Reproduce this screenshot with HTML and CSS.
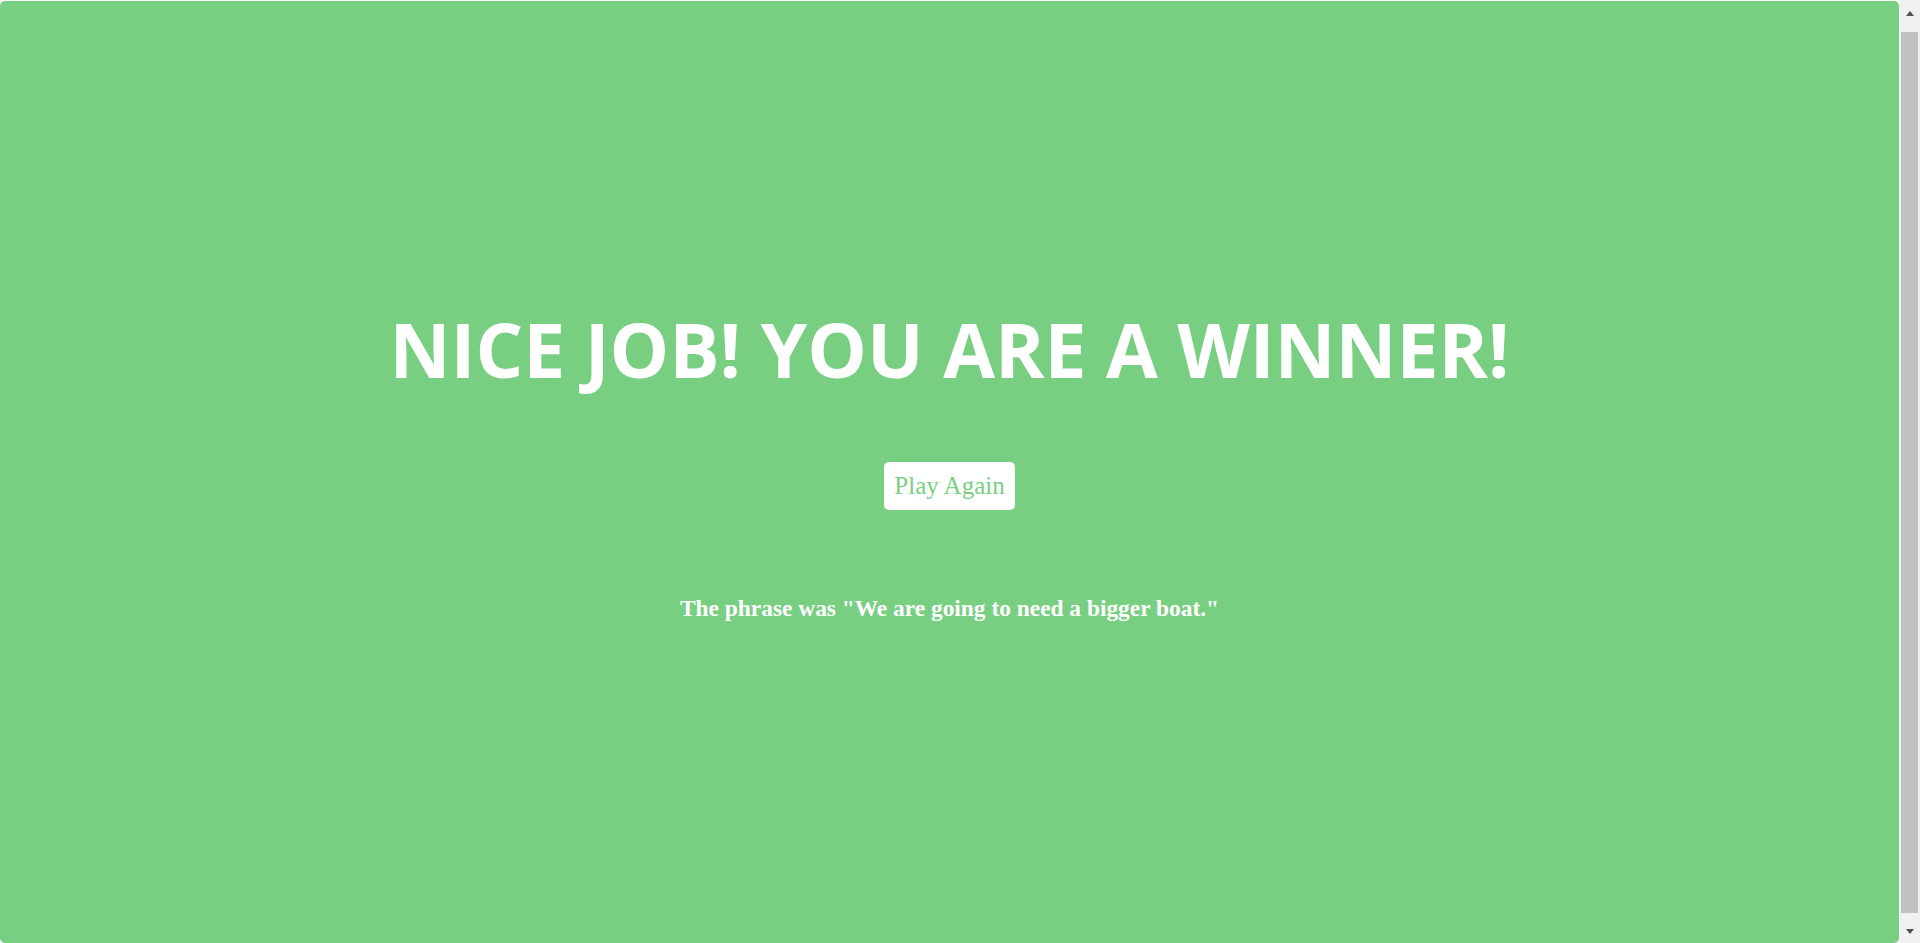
FILE: index.html
```html
<!DOCTYPE html>
<html lang="en">
<head>
<meta charset="utf-8">
<title>Wheel of Success</title>
<link rel="stylesheet" href="styles.css">
</head>
<body>
<div class="main-container"></div>
<div class="overlay win">
  <h2 class="title">NICE JOB! YOU ARE A WINNER!</h2>
  <button class="btn-reset">Play Again</button>
  <h3 class="phrase-msg">The phrase was "We are going to need a bigger boat."</h3>
</div>
<div class="scrollbar" aria-hidden="true">
  <span class="arrow"><span class="tri tri-up"></span></span>
  <div class="track"><div class="thumb"></div></div>
  <span class="arrow"><span class="tri tri-down"></span></span>
</div>
</body>
</html>
```

FILE: styles.css
```css
html, body {
  margin: 0;
  padding: 0;
}
body {
  background: #f7f7f7;
  font-family: "Liberation Serif", "Times New Roman", serif;
}
.main-container {
  min-height: 943px;
}
.overlay {
  position: fixed;
  top: 1px;
  left: 0;
  right: 21px;
  bottom: 0;
  padding-bottom: 18px;
  display: flex;
  flex-direction: column;
  justify-content: center;
  align-items: center;
  border-radius: 5px;
}
.win {
  background-color: #78cf82;
}
.title {
  margin: 0;
  color: #fff;
  font-family: "Open Sans", sans-serif;
  font-weight: 700;
  font-size: 75px;
  line-height: 1.2;
}
.btn-reset {
  margin: 68px 0 0;
  padding: 10px 10px;
  border: none;
  border-radius: 5px;
  background: #fff;
  color: #78cf82;
  font-family: "Liberation Serif", "Times New Roman", serif;
  font-size: 25px;
  cursor: pointer;
}
.phrase-msg {
  margin: 85px 0 0;
  color: #fff;
  font-family: "Liberation Serif", "Times New Roman", serif;
  font-weight: 700;
  font-size: 23.4px;
}
.scrollbar {
  position: fixed;
  top: 0;
  right: 0;
  bottom: 0;
  width: 20px;
  background: #f1f1f1;
  display: flex;
  flex-direction: column;
}
.arrow {
  height: 24px;
  display: flex;
  align-items: center;
  justify-content: center;
  flex: none;
}
.tri {
  width: 0;
  height: 0;
  border-left: 4.5px solid transparent;
  border-right: 4.5px solid transparent;
}
.tri-up {
  border-bottom: 5px solid #505050;
  margin-top: 2px;
}
.tri-down {
  border-top: 5px solid #505050;
}
.track {
  flex: 1;
  padding: 8px 2px 6px 1px;
  display: flex;
}
.thumb {
  flex: 1;
  background: #c1c1c1;
}
```
